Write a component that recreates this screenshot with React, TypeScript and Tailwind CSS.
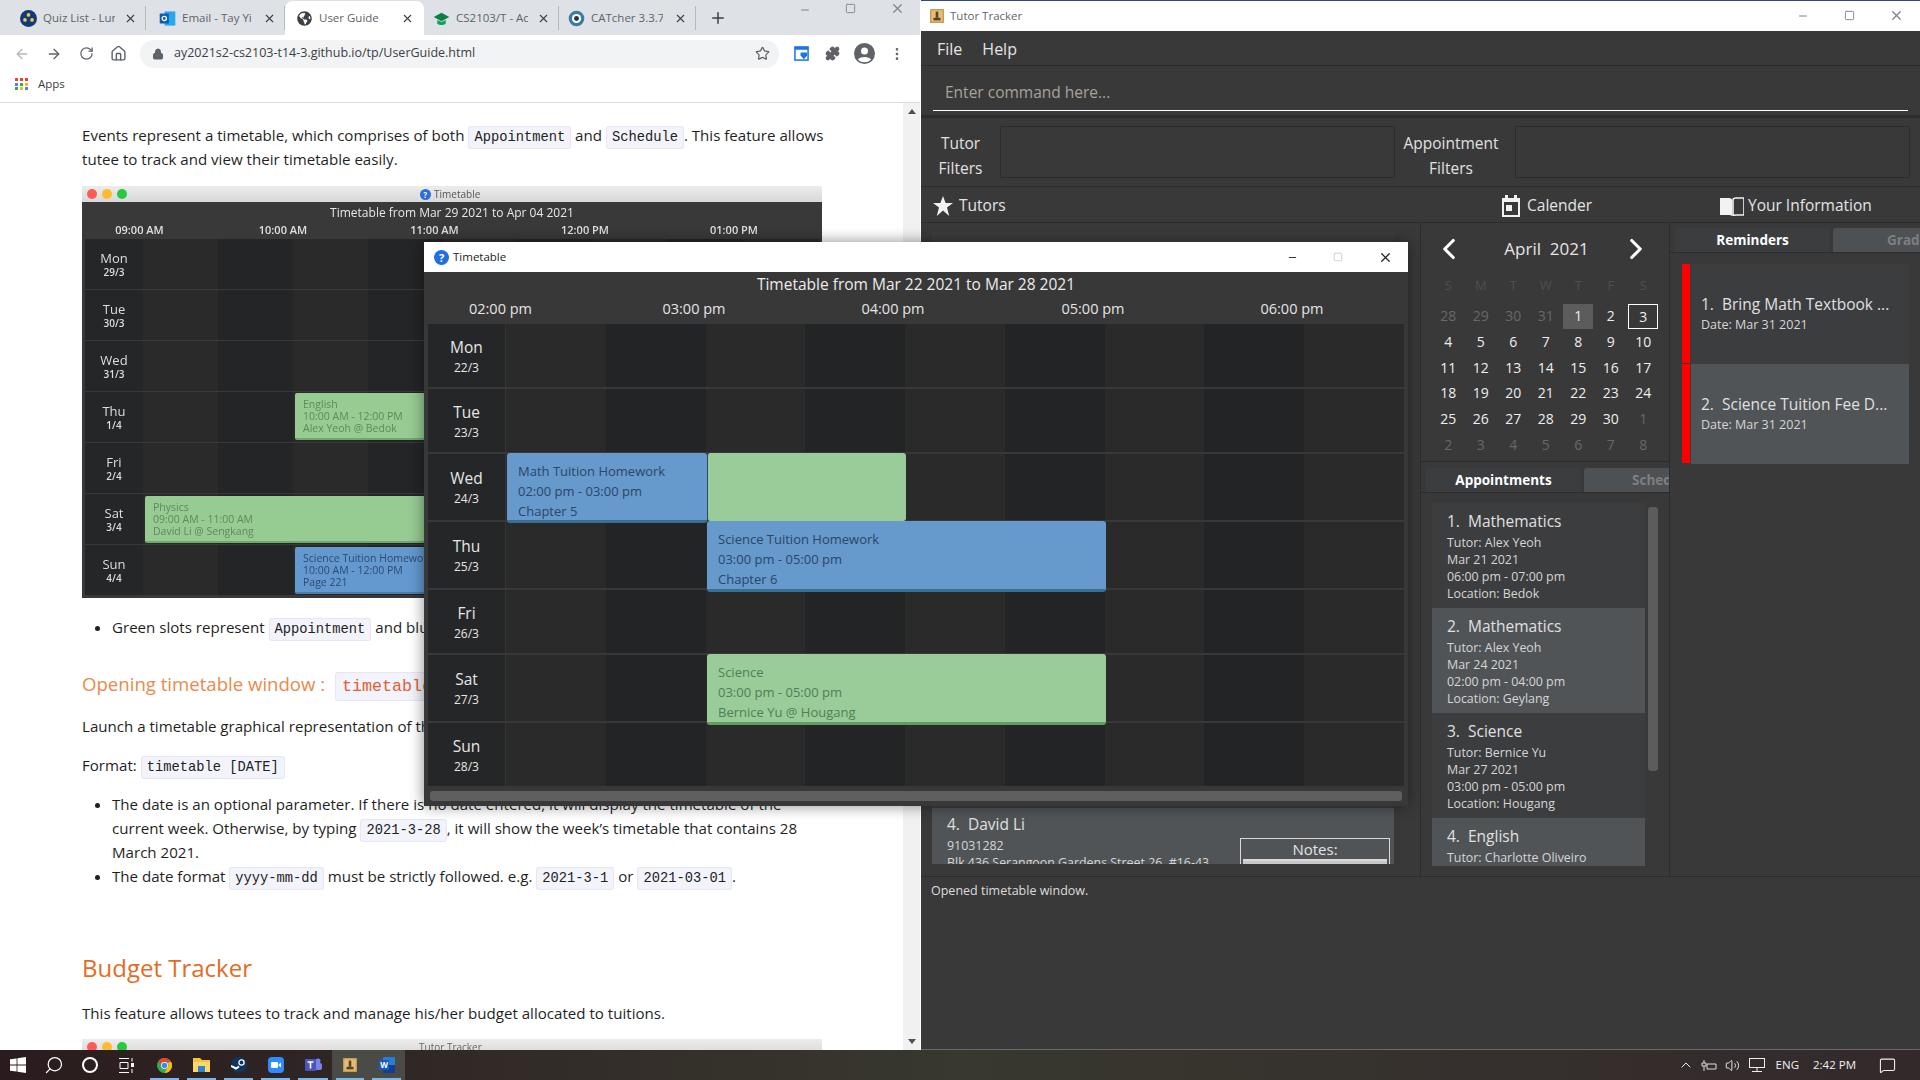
import React from "react";
import { ArrowLeft, ArrowRight, RotateCw, House, Lock, Star, Puzzle, EllipsisVertical, X, Plus, Minus, Square, ChevronLeft, ChevronRight, Search, ChevronUp, Volume2, MessageSquare } from "lucide-react";
import { FaGlobeAmericas } from "react-icons/fa";

const Code = ({ children }: { children: React.ReactNode }) => (
  <code className="font-['Liberation_Mono',monospace] text-[13.75px] leading-[14px] text-[#222] bg-[#f3f3fc] border border-[#e6e6f4] rounded-[3px] px-[5px] py-[3px]">{children}</code>
);

const Chrome = ({ s = 16 }: { s?: number }) => (
  <svg width={s} height={s} viewBox="0 0 24 24">
    <circle cx="12" cy="12" r="12" fill="#34a853" />
    <path d="M12 0a12 12 0 0 1 10.4 6H12a6 6 0 0 0-5.6 3.8L2.3 5A12 12 0 0 1 12 0z" fill="#ea4335" />
    <path d="M22.4 6A12 12 0 0 1 12 24l5.2-9A6 6 0 0 0 16.8 8z" fill="#fbbc05" />
    <circle cx="12" cy="12" r="5.5" fill="#fff" />
    <circle cx="12" cy="12" r="4.3" fill="#4285f4" />
  </svg>
);

const tabs = [
  { t: "Quiz List - Lun", w: "w-[139px]", pl: "pl-[13px]", icon: <svg width="17" height="17" viewBox="0 0 24 24"><circle cx="12" cy="12" r="12" fill="#123a7a" /><circle cx="12" cy="7" r="2.6" fill="#f2c94c" /><circle cx="7" cy="14" r="2.6" fill="#f2c94c" /><circle cx="17" cy="14" r="2.6" fill="#f2c94c" /></svg> },
  { t: "Email - Tay Yi", w: "w-[139px]", pl: "pl-[13px]", icon: <svg width="17" height="17" viewBox="0 0 24 24"><rect x="8" y="2" width="15" height="20" fill="#28a8ea" /><rect x="1" y="5" width="13" height="14" rx="1" fill="#0a5fb4" /><circle cx="7.5" cy="12" r="3" fill="none" stroke="#fff" strokeWidth="1.8" /></svg> },
  { t: "User Guide", w: "w-[139px]", pl: "pl-[11px]", active: true, icon: <FaGlobeAmericas size={15} color="#3c4043" /> },
  { t: "CS2103/T - Ac", w: "w-[135px]", pl: "pl-[9px]", icon: <svg width="17" height="17" viewBox="0 0 24 24"><path d="M12 4 1 10l11 6 11-6z" fill="#0b8043" /><path d="M6 14v5c3 3 9 3 12 0v-5l-6 3z" fill="#14a058" /></svg> },
  { t: "CATcher 3.3.7", w: "w-[137px]", pl: "pl-[9px]", icon: <svg width="17" height="17" viewBox="0 0 24 24"><circle cx="12" cy="12" r="11" fill="#3b7d9c" /><circle cx="12" cy="12" r="6.5" fill="#fff" /><circle cx="12" cy="12" r="3.5" fill="#234" /></svg> },
];

const Tab = ({ t, w, pl, icon, active }: any) => (
  <div className={`${w} ${pl} h-[34px] flex items-center ${active ? "bg-white rounded-t-[8px] pr-[10px]" : "pr-[8px] border-r border-[#9aa0a6]/60 my-[5px] !h-[24px]"}`}>
    <span className="w-[17px] flex justify-center shrink-0">{icon}</span>
    <span className="ml-[6px] w-[72px] overflow-hidden whitespace-nowrap text-[11.5px] text-[#5f6368]">{t}</span>
    <X size={13} className="ml-auto text-[#3c4043] shrink-0" />
  </div>
);

const appsColors = ["bg-[#ea4335]", "bg-[#ea4335]", "bg-[#ea4335]", "bg-[#4285f4]", "bg-[#34a853]", "bg-[#fbbc05]", "bg-[#34a853]", "bg-[#fbbc05]", "bg-[#4285f4]"];

const Lights = () => (
  <div className="flex gap-[5px] pl-[5px]">
    <span className="w-[10px] h-[10px] rounded-full bg-[#fc5b57]" />
    <span className="w-[10px] h-[10px] rounded-full bg-[#fdbc2e]" />
    <span className="w-[10px] h-[10px] rounded-full bg-[#28c83f]" />
  </div>
);

const oldRows = [["Mon", "29/3"], ["Tue", "30/3"], ["Wed", "31/3"], ["Thu", "1/4"], ["Fri", "2/4"], ["Sat", "3/4"], ["Sun", "4/4"]];
const cells = [0, 1, 2, 3, 4, 5, 6, 7, 8];

const OldEvent = ({ c, lines }: { c: string; lines: string[] }) => (
  <div className={`absolute rounded-[2px] pl-[8px] pt-[5px] text-[10.5px] leading-[12px] overflow-hidden whitespace-nowrap ${c}`}>
    {lines.map((l) => <div key={l}>{l}</div>)}
  </div>
);

const Shot = () => (
  <div className="w-[740px] h-[412px] flex flex-col overflow-hidden blur-[0.3px] mt-[15px] shrink-0">
    <div className="h-[16px] bg-gradient-to-b from-[#ececec] to-[#d8d8d8] flex items-center relative">
      <Lights />
      <span className="absolute left-[338px] flex items-center gap-[3px] text-[10px] text-[#555]">
        <span className="w-[11px] h-[11px] rounded-full bg-[#2b6fd6] text-white text-[8px] leading-[11px] text-center font-bold">?</span>Timetable
      </span>
    </div>
    <div className="flex-1 bg-[#393939] flex flex-col">
      <div className="text-center text-[12px] leading-[20px] pt-[1px] h-[20px] text-[#e8e8e8]">Timetable from Mar 29 2021 to Apr 04 2021</div>
      <div className="flex text-[11px] leading-[15px] text-[#e0e0e0] h-[17px] font-semibold">
        {[["09:00 AM", "w-[115px]"], ["10:00 AM", "w-[172px]"], ["11:00 AM", "w-[131px]"], ["12:00 PM", "w-[170px]"], ["01:00 PM", "w-[128px]"]].map(([t, w]) => (
          <span key={t} className={`${w} text-center`}>{t}</span>
        ))}
      </div>
      <div className="mx-[3px] relative flex flex-col gap-[1px]">
        {oldRows.map(([d, n]) => (
          <div key={d} className="h-[50px] flex bg-[#252628]">
            <div className="w-[58px] flex flex-col items-center justify-center text-[#ddd]">
              <span className="text-[13px] leading-[15px]">{d}</span>
              <span className="text-[10px] leading-[12px] font-semibold">{n}</span>
            </div>
            {cells.map((c) => <div key={c} className={`w-[75px] ${c % 2 ? "bg-[#242527]" : "bg-[#2a2a2a]"}`} />)}
          </div>
        ))}
        <OldEvent c="left-[210px] top-[154px] w-[200px] h-[47px] bg-[#96cb92] text-[#5d8a5c] border-b-2 border-[#6fa86c]" lines={["English", "10:00 AM - 12:00 PM", "Alex Yeoh @ Bedok"]} />
        <OldEvent c="left-[60px] top-[257px] w-[360px] h-[47px] bg-[#96cb92] text-[#5d8a5c] border-b-2 border-[#6fa86c]" lines={["Physics", "09:00 AM - 11:00 AM", "David Li @ Sengkang"]} />
        <OldEvent c="left-[210px] top-[308px] w-[200px] h-[47px] bg-[#6399cf] text-[#2f4a70] border-b-2 border-[#4a7da8]" lines={["Science Tuition Homework", "10:00 AM - 12:00 PM", "Page 221"]} />
      </div>
    </div>
  </div>
);

const Browser = () => (
  <div className="absolute left-0 top-0 w-[920px] h-[1050px] flex flex-col bg-white">
    <div className="h-[35px] bg-[#dee1e6] flex items-end pl-[7px] relative">
      {tabs.map((t) => <Tab key={t.t} {...t} />)}
      <Plus size={18} className="ml-[13px] mb-[8px] text-[#3c4043]" />
      <div className="ml-auto self-start flex items-center text-[#80868b] pt-[1px]">
        <Minus size={12} className="mr-[34px] mt-[2px]" />
        <Square size={11} className="mr-[34px]" />
        <X size={15} className="mr-[15px]" />
      </div>
    </div>
    <div className="h-[35px] flex items-center pl-[14px] pt-[2px] text-[#5f6368]">
      <ArrowLeft size={16} className="text-[#b4b7bb]" />
      <ArrowRight size={16} className="ml-[16px]" />
      <RotateCw size={15} className="ml-[17px]" />
      <House size={17} className="ml-[16px]" />
      <div className="ml-[13px] w-[639px] h-[28px] rounded-full bg-[#f1f3f4] flex items-center pl-[12px]">
        <Lock size={12} fill="#5f6368" />
        <span className="ml-[10px] text-[12.5px] text-[#3c4043] whitespace-nowrap">ay2021s2-cs2103-t14-3.github.io/tp/UserGuide.html</span>
        <Star size={15} className="ml-auto mr-[9px]" />
      </div>
      <svg width="15" height="15" viewBox="0 0 16 16" className="ml-[15px]"><rect x="1" y="1" width="14" height="14" fill="none" stroke="#1a73e8" strokeWidth="1.6" /><rect x="1" y="1" width="14" height="3" fill="#1a73e8" /><path d="M7 7h7v3l-3.5 4L7 10z" fill="#1a73e8" /></svg>
      <Puzzle size={15} fill="#5f6368" className="ml-[16px]" />
      <svg width="21" height="21" viewBox="0 0 24 24" className="ml-[14px]"><circle cx="12" cy="12" r="12" fill="#5f6368" /><circle cx="12" cy="9" r="4" fill="#fff" /><path d="M4.5 19c1.5-4 13.5-4 15 0a11 11 0 0 1-15 0z" fill="#fff" /></svg>
      <EllipsisVertical size={16} className="ml-[14px]" />
    </div>
    <div className="h-[33px] border-b border-[#dadce0] flex items-center pl-[15px] pb-[4px]">
      <div className="grid grid-cols-3 gap-[1.5px] w-[13px]">
        {appsColors.map((c, i) => <span key={i} className={`w-[3px] h-[3px] ${c}`} />)}
      </div>
      <span className="ml-[10px] text-[11.5px] text-[#3c4043]">Apps</span>
    </div>
    <div className="flex-1 flex overflow-hidden">
      <div className="flex-1 overflow-hidden pl-[82px] pt-[20px] text-[15.1px] leading-[24px] text-[#1f1f1f] flex flex-col">
        <p className="w-[745px]">Events represent a timetable, which comprises of both <Code>Appointment</Code> and <Code>Schedule</Code>. This feature allows tutee to track and view their timetable easily.</p>
        <Shot />
        <ul className="list-disc pl-[30px] mt-[17px] w-[760px]"><li>Green slots represent <Code>Appointment</Code> and blue slots represent <Code>Schedule</Code>.</li></ul>
        <h3 className="mt-[31px] text-[18.6px] leading-[28px] text-[#ea8a4c] whitespace-nowrap">Opening timetable window : <code className="ml-[5px] font-['Liberation_Mono',monospace] text-[16.7px] leading-[17px] text-[#e0602f] bg-[#f3f3fc] border border-[#e6e6f4] rounded-[3px] px-[6px] py-[4px]">timetable</code></h3>
        <p className="mt-[16px] whitespace-nowrap">Launch a timetable graphical representation of the week.</p>
        <p className="mt-[15px]">Format: <Code>timetable [DATE]</Code></p>
        <ul className="list-disc pl-[30px] mt-[15px] w-[745px]">
          <li>The date is an optional parameter. If there is no date entered, it will display the timetable of the current week. Otherwise, by typing <Code>2021-3-28</Code>, it will show the week’s timetable that contains 28 March 2021.</li>
          <li>The date format <Code>yyyy-mm-dd</Code> must be strictly followed. e.g. <Code>2021-3-1</Code> or <Code>2021-03-01</Code>.</li>
        </ul>
        <h2 className="mt-[62px] text-[24px] leading-[36px] text-[#e46c1f]">Budget Tracker</h2>
        <p className="mt-[15px]">This feature allows tutees to track and manage his/her budget allocated to tuitions.</p>
        <div className="w-[740px] h-[16px] mt-[14px] bg-gradient-to-b from-[#ececec] to-[#d8d8d8] flex items-center relative shrink-0 blur-[0.3px]">
          <Lights />
          <span className="absolute left-[337px] text-[10px] text-[#666]">Tutor Tracker</span>
        </div>
      </div>
      <div className="w-[17px] bg-[#f1f1f1] flex flex-col items-center justify-between py-[6px] text-[#505050]">
        <span className="w-0 h-0 border-x-[4px] border-x-transparent border-b-[5px] border-b-[#505050]" />
        <span className="w-0 h-0 border-x-[4px] border-x-transparent border-t-[5px] border-t-[#505050]" />
      </div>
    </div>
  </div>
);

const Card = ({ alt, title, lines }: { alt?: boolean; title: string; lines: string[] }) => (
  <div className={`h-[105px] shrink-0 pl-[15px] pt-[7px] ${alt ? "bg-[#505456]" : "bg-[#3c3d3f]"}`}>
    <div className="text-[15.5px] leading-[22px] text-[#e0e0e0] whitespace-pre font-medium">{title}</div>
    <div className="text-[12.4px] leading-[17px] text-[#d6d6d6] mt-[2px]">
      {lines.map((l) => <div key={l}>{l}</div>)}
    </div>
  </div>
);

const Reminder = ({ alt, title }: { alt?: boolean; title: string }) => (
  <div className="h-[100px] flex">
    <div className="w-[8px] h-[99px] bg-[#ff0000] mr-[1px]" />
    <div className={`flex-1 pl-[10px] pt-[29px] ${alt ? "bg-[#505456]" : "bg-[#3c3d3f]"}`}>
      <div className="text-[15.5px] leading-[22px] text-[#e0e0e0] whitespace-pre font-medium">{title}</div>
      <div className="text-[12.5px] leading-[18px] mt-[1px] text-[#d6d6d6]">Date: Mar 31 2021</div>
    </div>
  </div>
);

const TabPair = ({ a, b, mt, pl }: { a: string; b: string; mt: string; pl: string }) => (
  <div className={`h-[25px] ${mt} flex gap-[3px] border-b border-[#2c2c2c] pl-[5px] overflow-hidden shrink-0`}>
    <div className="w-[155px] shrink-0 rounded-t-[3px] bg-[#3c3d3f] text-center text-[13.5px] leading-[24px] font-bold text-white">{a}</div>
    <div className={`flex-1 rounded-tl-[3px] bg-[#4d5153] ${pl} text-[13.5px] leading-[24px] font-bold text-[#7d8082] whitespace-nowrap overflow-hidden`}>{b}</div>
  </div>
);

const calRows = [
  [["28", 1], ["29", 1], ["30", 1], ["31", 1], ["1", 2], ["2", 0], ["3", 3]],
  [["4", 0], ["5", 0], ["6", 0], ["7", 0], ["8", 0], ["9", 0], ["10", 0]],
  [["11", 0], ["12", 0], ["13", 0], ["14", 0], ["15", 0], ["16", 0], ["17", 0]],
  [["18", 0], ["19", 0], ["20", 0], ["21", 0], ["22", 0], ["23", 0], ["24", 0]],
  [["25", 0], ["26", 0], ["27", 0], ["28", 0], ["29", 0], ["30", 0], ["1", 1]],
  [["2", 1], ["3", 1], ["4", 1], ["5", 1], ["6", 1], ["7", 1], ["8", 1]],
] as [string, number][][];

const Calendar = () => (
  <div className="h-[239px] border-b border-[#2c2c2c] pl-[11px] pr-[10px] shrink-0">
    <div className="h-[50px] pt-[2px] flex items-center justify-between pr-[6px]">
      <ChevronLeft size={34} strokeWidth={2.2} className="text-white" />
      <span className="text-[17px] pl-[8px] text-[#e6e6e6] whitespace-pre">April  2021</span>
      <ChevronRight size={34} strokeWidth={2.2} className="text-white" />
    </div>
    <div className="grid grid-cols-[repeat(7,32.5px)] text-center text-[13px] text-[#4f4f4f] h-[31px] leading-[25px]">
      {["S", "M", "T", "W", "T", "F", "S"].map((d, i) => <span key={i}>{d}</span>)}
    </div>
    <div className="grid grid-cols-[repeat(7,32.5px)] auto-rows-[25.7px] text-center text-[14px] text-[#eeeeee]">
      {calRows.flat().map(([d, k], i) => (
        <div key={i} className="flex items-center justify-center">
          <span className={`w-[30px] h-[25px] leading-[24px] ${k === 1 ? "text-[#686868]" : ""} ${k === 2 ? "bg-[#5c5c5c]" : ""} ${k === 3 ? "border border-white leading-[22px]" : ""}`}>{d}</span>
        </div>
      ))}
    </div>
  </div>
);

const Tracker = () => (
  <div className="absolute left-[921px] top-0 w-[999px] h-[1050px] flex flex-col bg-[#393939] border-t border-[#2e4a78]">
    <div className="h-[30px] bg-white flex items-center pl-[9px] pb-[1px] shrink-0">
      <svg width="14" height="14" viewBox="0 0 16 16"><rect width="16" height="16" rx="1" fill="#c79a50" /><rect x="1.5" y="1.5" width="13" height="13" fill="#e3bd7c" /><rect x="6.5" y="3" width="3" height="7" fill="#5b4320" /><rect x="4" y="10" width="8" height="3" fill="#5b4320" /></svg>
      <span className="ml-[6px] text-[11.5px] text-[#666]">Tutor Tracker</span>
      <div className="ml-auto flex items-center text-[#808080]">
        <Minus size={12} className="mr-[35px]" />
        <Square size={11} className="mr-[34px]" />
        <X size={15} className="mr-[16px]" />
      </div>
    </div>
    <div className="h-[35px] flex items-center gap-[20px] pl-[16px] pt-[2px] text-[16px] text-[#e4e4e4] border-b border-[#2c2c2c] shrink-0">
      <span>File</span><span>Help</span>
    </div>
    <div className="h-[52px] px-[12px] pt-[8px] border-b-[3px] border-[#2c2c2c] shrink-0">
      <div className="h-[37px] border-b-[1.5px] border-white pl-[12px] pt-[7px] text-[15.5px] text-[#a8a29a]">Enter command here...</div>
    </div>
    <div className="h-[69px] flex items-center border-b border-[#2c2c2c] shrink-0">
      <div className="w-[79px] mt-[8px] text-center text-[15.5px] leading-[25px] text-[#e0e0e0]">Tutor<br />Filters</div>
      <div className="w-[395px] h-[52px] border border-[#2c2c2c]" />
      <div className="w-[120px] mt-[8px] pr-[8px] text-center text-[15.5px] leading-[25px] text-[#e0e0e0]">Appointment<br />Filters</div>
      <div className="w-[395px] h-[52px] border border-[#2c2c2c]" />
    </div>
    <div className="h-[36px] flex items-center pt-[2px] border-b border-[#2c2c2c] text-[15.5px] text-[#e4e4e4] shrink-0">
      <div className="w-[500px] flex items-center pl-[12px] gap-[6px]">
        <svg width="20" height="20" viewBox="0 0 20 20"><path d="M10 0l2.6 7H20l-6 4.4L16.2 20 10 14.6 3.8 20 6 11.4 0 7h7.4z" fill="#f2f2f2" /></svg>
        <span>Tutors</span>
      </div>
      <div className="w-[250px] flex items-center pl-[81px] gap-[7px]">
        <svg width="18" height="22" viewBox="0 0 18 22"><path d="M0 3h3V0h3v3h6V0h3v3h3v19H0z" fill="#f2f2f2" /><rect x="2" y="7" width="14" height="13" fill="#393939" /><rect x="4" y="10" width="6" height="6" fill="#f2f2f2" /></svg>
        <span>Calender</span>
      </div>
      <div className="flex items-center pl-[49px] gap-[4px]">
        <svg width="24" height="20" viewBox="0 0 24 20"><path d="M0 2h9c2 0 3 1 3 2v16c-1-1-2-1-3-1H0z" fill="#f2f2f2" /><path d="M13 4c0-1 1-2 3-2h8v17h-8c-1 0-2 0-3 1z" fill="none" stroke="#f2f2f2" strokeWidth="1.6" /></svg>
        <span>Your Information</span>
      </div>
    </div>
    <div className="flex-1 flex min-h-0">
      <div className="w-[500px] border-r border-[#2c2c2c] pl-[11px] pr-[26px] pt-[9px] pb-[12px] flex flex-col shrink-0 overflow-hidden">
        <div className="flex-1 bg-[#3c3d3f]" />
        <div className="h-[56px] bg-[#505456] pl-[15px] pt-[5px] overflow-hidden relative shrink-0">
          <div className="text-[15.5px] leading-[22px] text-[#e0e0e0] whitespace-pre font-medium">4.  David Li</div>
          <div className="text-[12.4px] leading-[17px] text-[#d6d6d6] mt-[2px]">91031282</div>
          <div className="text-[12.4px] leading-[17px] text-[#d6d6d6] whitespace-nowrap">Blk 436 Serangoon Gardens Street 26, #16-43</div>
          <div className="absolute left-[308px] top-[30px] w-[150px] h-[40px] border border-[#d8d8d8] text-center text-[15px] leading-[20px] font-medium text-[#e4e4e4]">
            Notes:
            <div className="mx-[2px] h-[10px] border-t-2 border-[#d8d8d8] bg-[#c8c8c8]" />
          </div>
        </div>
      </div>
      <div className="w-[249px] border-r border-[#2c2c2c] flex flex-col shrink-0 overflow-hidden">
        <Calendar />
        <TabPair a="Appointments" b="Sched" mt="mt-[6px]" pl="pl-[48px]" />
        <div className="flex-1 flex min-h-0 pt-[10px] pl-[11px] pb-[10px] overflow-hidden">
          <div className="w-[213px] flex flex-col overflow-hidden">
            <Card title="1.  Mathematics" lines={["Tutor: Alex Yeoh", "Mar 21 2021", "06:00 pm - 07:00 pm", "Location: Bedok"]} />
            <Card alt title="2.  Mathematics" lines={["Tutor: Alex Yeoh", "Mar 24 2021", "02:00 pm - 04:00 pm", "Location: Geylang"]} />
            <Card title="3.  Science" lines={["Tutor: Bernice Yu", "Mar 27 2021", "03:00 pm - 05:00 pm", "Location: Hougang"]} />
            <Card alt title="4.  English" lines={["Tutor: Charlotte Oliveiro"]} />
          </div>
          <div className="w-[10px] h-[264px] ml-[3px] mt-[4px] rounded-[3px] bg-[#5c5c5c]" />
        </div>
      </div>
      <div className="flex-1 flex flex-col overflow-hidden">
        <TabPair a="Reminders" b="Grades" mt="mt-[5px]" pl="pl-[54px]" />
        <div className="pl-[12px] pr-[11px] pt-[11px]">
          <Reminder title="1.  Bring Math Textbook ..." />
          <Reminder alt title="2.  Science Tuition Fee D..." />
        </div>
      </div>
    </div>
    <div className="h-[174px] border-t border-[#2c2c2c] pl-[10px] pt-[5px] text-[12.5px] leading-[18px] text-[#dcdcdc] shrink-0 border-b border-b-[#6a6a6a]">Opened timetable window.</div>
  </div>
);

const rows = [
  ["Mon", "22/3", "h-[63px]"], ["Tue", "23/3", "h-[63px]"], ["Wed", "24/3", "h-[66px]"], ["Thu", "25/3", "h-[66px]"],
  ["Fri", "26/3", "h-[63px]"], ["Sat", "27/3", "h-[66px]"], ["Sun", "28/3", "h-[63px]"],
];

const Ev = ({ c, lines }: { c: string; lines: string[] }) => (
  <div className={`absolute rounded-[3px] pl-[11px] pt-[9px] text-[13px] leading-[19.8px] whitespace-nowrap ${c}`}>
    {lines.map((l) => <div key={l}>{l}</div>)}
  </div>
);

const blue = "bg-[#6699cc] text-[#2b4668] border-b-[3px] border-[#3a6f8f]";
const green = "bg-[#99cc99] text-[#4f7f57] border-b-[3px] border-[#5f9e62]";

const Timetable = () => (
  <div className="absolute left-[424px] top-[242px] w-[984px] h-[564px] flex flex-col bg-[#383838] shadow-[0_0_14px_rgba(0,0,0,0.45)]">
    <div className="h-[30px] bg-white flex items-center pl-[10px] shrink-0">
      <span className="w-[15px] h-[15px] rounded-full bg-[#1f6fdc] text-white text-[11px] leading-[15px] text-center font-bold">?</span>
      <span className="ml-[4px] text-[11.5px] text-[#222]">Timetable</span>
      <div className="ml-auto flex items-center">
        <Minus size={11} className="mr-[35px] text-[#222]" />
        <Square size={10} className="mr-[35px] text-[#c8c8c8]" />
        <X size={15} className="mr-[15px] text-[#222]" />
      </div>
    </div>
    <div className="h-[25px] text-center text-[15.5px] leading-[24px] text-[#ececec] shrink-0">Timetable from Mar 22 2021 to Mar 28 2021</div>
    <div className="h-[27px] flex text-[14.5px] leading-[24px] text-[#e4e4e4] shrink-0">
      {[["02:00 pm", "w-[153px]"], ["03:00 pm", "w-[234px]"], ["04:00 pm", "w-[164px]"], ["05:00 pm", "w-[236px]"], ["06:00 pm", "w-[162px]"]].map(([t, w]) => (
        <span key={t} className={`${w} text-center whitespace-nowrap`}>{t}</span>
      ))}
    </div>
    <div className="mx-[4px] relative flex flex-col gap-[2px] shrink-0">
      {rows.map(([d, n, h]) => (
        <div key={d} className={`${h} flex bg-[#252628]`}>
          <div className="w-[78px] border-r border-[#333] flex flex-col items-center justify-center text-[#e6e6e6]">
            <span className="text-[15.5px] leading-[24px]">{d}</span>
            <span className="text-[12px] leading-[18px]">{n}</span>
          </div>
          {cells.map((c) => <div key={c} className={`flex-1 ${c % 2 ? "bg-[#232426]" : "bg-[#2a2a2a]"}`} />)}
        </div>
      ))}
      <Ev c={`left-[79px] top-[129px] w-[200px] h-[70px] ${blue}`} lines={["Math Tuition Homework", "02:00 pm - 03:00 pm", "Chapter 5"]} />
      <Ev c="left-[279px] top-[129px] w-[199px] h-[68px] bg-[#99cc99] border-l border-[#2b4668]" lines={[]} />
      <Ev c={`left-[279px] top-[197px] w-[399px] h-[71px] ${blue}`} lines={["Science Tuition Homework", "03:00 pm - 05:00 pm", "Chapter 6"]} />
      <Ev c={`left-[279px] top-[330px] w-[399px] h-[71px] ${green}`} lines={["Science", "03:00 pm - 05:00 pm", "Bernice Yu @ Hougang"]} />
    </div>
    <div className="mx-[6px] mt-[5px] h-[10px] rounded-[3px] bg-[#5f5f5f] shrink-0" />
  </div>
);

const Bar = ({ w, on, children }: { w: string; on?: boolean; children: React.ReactNode }) => (
  <div className={`${w} h-[30px] flex items-center justify-center relative ${on ? "bg-[#4a4b47]" : ""}`}>
    {children}
    <span className="absolute left-[4px] right-[4px] bottom-0 h-[2px] bg-[#76b9ed]" />
  </div>
);

const Taskbar = () => (
  <div className="absolute left-0 bottom-0 w-[1920px] h-[30px] flex items-center text-white bg-gradient-to-r from-[#2a1c1e] via-[#38382f] to-[#33292b]">
    <div className="w-[36px] flex justify-center">
      <svg width="16" height="16" viewBox="0 0 16 16"><path d="M0 2.3 6.6 1.4v6.2H0zM7.4 1.3 16 0v7.6H7.4zM0 8.4h6.6v6.2L0 13.7zM7.4 8.4H16V16l-8.6-1.2z" fill="#fff" /></svg>
    </div>
    <div className="w-[36px] flex justify-center"><Search size={20} strokeWidth={1.5} className="-scale-x-100" /></div>
    <div className="w-[36px] flex justify-center"><span className="w-[16px] h-[16px] rounded-full border-[2.5px] border-white" /></div>
    <div className="w-[38px] flex justify-center">
      <svg width="16" height="15" viewBox="0 0 16 15" fill="none" stroke="#fff"><path d="M0 .5h10M0 14.5h10M1 4.5h8v6H1z" /><path d="M13 0v3.5M13 11v4" /><rect x="12" y="5" width="3" height="4" fill="#fff" stroke="none" /></svg>
    </div>
    <Bar w="w-[37px]"><Chrome s={15} /></Bar>
    <Bar w="w-[37px]"><svg width="17" height="14" viewBox="0 0 17 14"><path d="M0 0h7l2 2h8v12H0z" fill="#f5c242" /><rect x="0" y="4" width="17" height="10" fill="#fbd668" /><rect x="5" y="8" width="7" height="6" fill="#2b83d6" /></svg></Bar>
    <Bar w="w-[37px]"><svg width="16" height="16" viewBox="0 0 16 16"><circle cx="8" cy="8" r="8" fill="#10345c" /><circle cx="10.5" cy="5.5" r="2.6" fill="none" stroke="#fff" strokeWidth="1.3" /><path d="M0 9l5 2.5 3-2" stroke="#fff" strokeWidth="2" fill="none" /></svg></Bar>
    <Bar w="w-[37px]"><svg width="16" height="16" viewBox="0 0 16 16"><rect width="16" height="16" rx="4" fill="#2d8cff" /><rect x="3" y="5" width="7" height="6" rx="1" fill="#fff" /><path d="M10.5 7.5 13 5.5v5l-2.5-2z" fill="#fff" /></svg></Bar>
    <Bar w="w-[38px]"><svg width="17" height="16" viewBox="0 0 17 16"><circle cx="13" cy="4" r="2.5" fill="#7b83eb" /><rect x="9" y="6" width="8" height="7" rx="2" fill="#7b83eb" /><rect x="0" y="2" width="11" height="12" rx="1" fill="#4b53bc" /><path d="M2.5 5h6M5.5 5v6.5" stroke="#fff" strokeWidth="1.6" /></svg></Bar>
    <Bar w="w-[36px]" on><svg width="14" height="14" viewBox="0 0 16 16"><rect width="16" height="16" rx="1" fill="#c79a50" /><rect x="1.5" y="1.5" width="13" height="13" fill="#e3bd7c" /><rect x="6.5" y="3" width="3" height="7" fill="#5b4320" /><rect x="4" y="10" width="8" height="3" fill="#5b4320" /></svg></Bar>
    <Bar w="w-[37px]" on><svg width="16" height="16" viewBox="0 0 16 16"><rect x="4" y="0" width="12" height="16" rx="1" fill="#2b7cd3" /><rect x="4" y="8" width="12" height="8" fill="#103f91" /><rect x="0" y="3" width="10" height="10" rx="1" fill="#185abd" /><text x="5" y="11" textAnchor="middle" fontSize="8" fontWeight="700" fill="#fff">W</text></svg></Bar>
    <div className="ml-auto flex items-center text-[#f0f0f0]">
      <ChevronUp size={16} strokeWidth={1.5} />
      <svg width="16" height="13" viewBox="0 0 16 13" className="ml-[7px]" fill="none" stroke="#ddd"><path d="M3 1v3M1 4h4v3H1zM3 7v5M6 5h9v5H6z" /></svg>
      <Volume2 size={15} strokeWidth={1.5} className="ml-[8px]" />
      <svg width="16" height="14" viewBox="0 0 16 14" className="ml-[9px]" fill="none" stroke="#eee"><rect x=".5" y=".5" width="15" height="9" /><path d="M8 10v3M3 13.5h10" /></svg>
      <span className="ml-[11px] text-[11.5px]">ENG</span>
      <span className="ml-[14px] text-[11.5px] w-[44px] whitespace-nowrap">2:42 PM</span>
      <MessageSquare size={17} strokeWidth={1.5} className="ml-[22px] mr-[24px]" />
    </div>
  </div>
);

export default function App() {
  return (
    <div className="relative w-[1920px] h-[1080px] overflow-hidden bg-white font-['Open_Sans',sans-serif]">
      <Browser />
      <Tracker />
      <Timetable />
      <Taskbar />
    </div>
  );
}
